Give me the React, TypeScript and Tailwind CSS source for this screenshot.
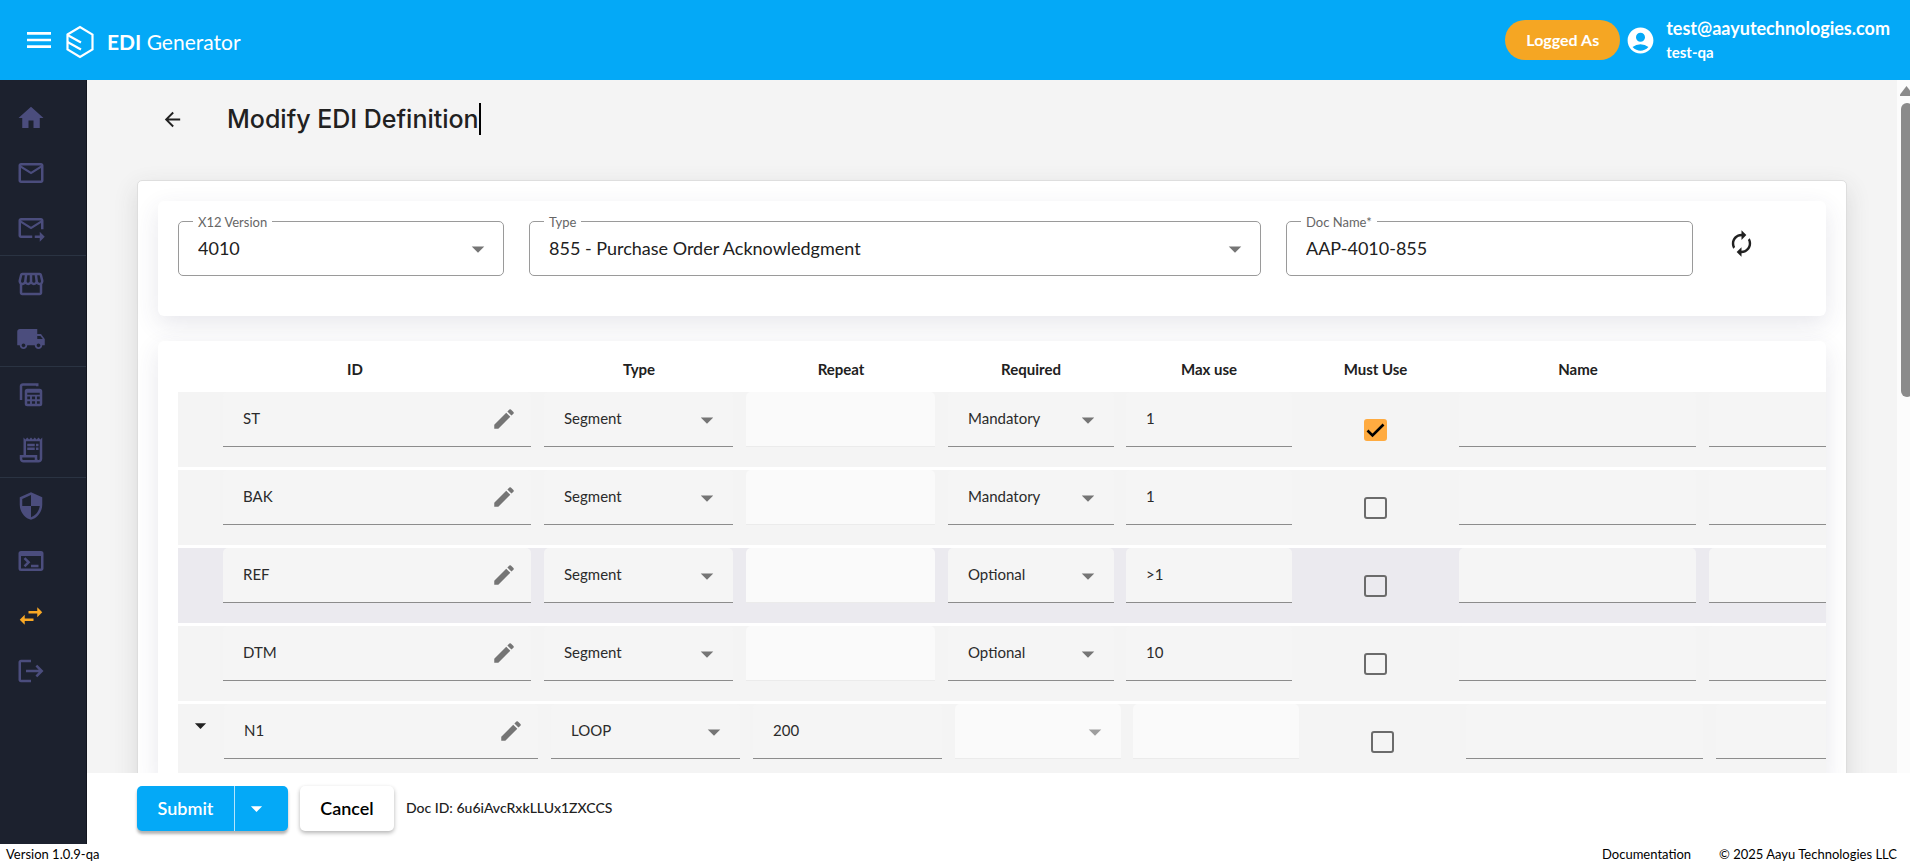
import type { ReactNode } from "react";
import type { IconType } from "react-icons";
import {
    MdAccountCircle,
    MdArrowBack,
    MdArrowDropDown,
    MdAutorenew,
    MdEdit,
    MdHome,
    MdLocalShipping,
    MdLogout,
    MdMailOutline,
    MdMenu,
    MdOutlineForwardToInbox,
    MdOutlineReceiptLong,
    MdOutlineStorefront,
    MdOutlineTerminal,
    MdSecurity,
    MdSwapHoriz,
} from "react-icons/md";

interface Segment {
    id: string;
    type: string;
    repeat?: string;
    required?: string;
    maxUse?: string;
    mustUse?: boolean;
    active?: boolean;
}

const SEGMENTS: Segment[] = [
    { id: "ST", type: "Segment", required: "Mandatory", maxUse: "1", mustUse: true },
    { id: "BAK", type: "Segment", required: "Mandatory", maxUse: "1" },
    { id: "REF", type: "Segment", required: "Optional", maxUse: ">1", active: true },
    { id: "DTM", type: "Segment", required: "Optional", maxUse: "10" },
    { id: "N1", type: "LOOP", repeat: "200" },
];

function TablesIcon({ size = 30 }: { size?: number }) {
    return (
        <svg width={size} height={size} viewBox="0 0 24 24" fill="none" stroke="currentColor" strokeWidth="2">
            <path d="M4 16V5a1.500 1.500 0 0 1 1.500-1.500H17V5" />
            <rect x="8" y="8" width="12" height="12" rx="1" />
            <path d="M8 9.500h12M8 12.500h12M8 16.200h12M12 12v8M16 12v8" strokeWidth="1.500" />
        </svg>
    );
}

const NAV_GROUPS: { label: string; icon: IconType | typeof TablesIcon; active?: boolean }[][] = [
    [
        { label: "Home", icon: MdHome },
        { label: "Inbox", icon: MdMailOutline },
        { label: "Outbox", icon: MdOutlineForwardToInbox },
    ],
    [
        { label: "Store", icon: MdOutlineStorefront },
        { label: "Shipping", icon: MdLocalShipping },
    ],
    [
        { label: "Tables", icon: TablesIcon },
        { label: "Receipts", icon: MdOutlineReceiptLong },
    ],
    [
        { label: "Security", icon: MdSecurity },
        { label: "Terminal", icon: MdOutlineTerminal },
        { label: "EDI definitions", icon: MdSwapHoriz, active: true },
        { label: "Log out", icon: MdLogout },
    ],
];

function Header() {
    return (
        <header className="flex h-20 shrink-0 items-center bg-[#04a9f7] pl-[23px] pr-[20px] text-white">
            <button type="button" aria-label="Menu">
                <MdMenu size={32} />
            </button>
            <a href="#" className="ml-[10px] flex items-center pt-1">
                <svg width="30" height="36" viewBox="0 0 30 36" fill="none" stroke="currentColor" strokeWidth="2.2">
                    <path d="M2.500 10.500 15 3l12.500 7.500v15L15 33 2.500 25.500z" />
                    <path d="M2.500 11 16 18.500M2.500 18 16 25.500" />
                </svg>
                <span className="ml-3 font-['Lato'] text-[21px] leading-8">
                    <b>EDI</b> Generator
                </span>
            </a>
            <div className="ml-auto flex items-center">
                <button type="button" className="h-10 rounded-full bg-[#f5a623] px-[21px] text-[16px] font-bold">
                    Logged As
                </button>
                <MdAccountCircle size={31} className="ml-[5px]" />
                <div className="ml-[10px] font-bold">
                    <div className="text-[18px] leading-6">test@aayutechnologies.com</div>
                    <div className="text-[15px] leading-6">test-qa</div>
                </div>
            </div>
        </header>
    );
}

function Sidebar() {
    return (
        <nav className="w-[87px] shrink-0 border-r border-[#12151f] bg-[#1c212e] pt-[10px]">
            {NAV_GROUPS.map((group, i) => (
                <ul key={i} className="border-b border-[#2a3342] last:border-b-0">
                    {group.map(({ label, icon: Icon, active }) => (
                        <li key={label}>
                            <a
                                href="#"
                                aria-label={label}
                                className={`flex h-[55px] items-center pl-4 ${active ? "text-[#f9a825]" : "text-[#4b4d7d]"}`}
                            >
                                <Icon size={30} />
                            </a>
                        </li>
                    ))}
                </ul>
            ))}
        </nav>
    );
}

function OutlinedField({ id, label, arrow, children }: { id: string; label: string; arrow?: boolean; children: ReactNode }) {
    return (
        <div className="relative h-[55px] rounded-[5px] border border-[#9a9a9a]">
            <label htmlFor={id} className="absolute -top-[10px] left-[14px] bg-white px-[5px] text-[13px] leading-5 text-[#666]">
                {label}
            </label>
            {children}
            {arrow && <MdArrowDropDown size={30} className="pointer-events-none absolute right-[10px] top-3 text-[#757575]" />}
        </div>
    );
}

const outlinedControl = "block h-[52px] w-full appearance-none bg-transparent px-[19px] text-[18px] text-[#212121] outline-none";

function DocumentForm() {
    return (
        <section className="grid h-[115px] grid-cols-[326fr_732fr_407fr_108fr] items-start gap-x-[25px] rounded-md bg-white pl-5 pt-5 shadow-[0_8px_24px_rgba(60,60,100,0.12)]">
            <OutlinedField id="version" label="X12 Version" arrow>
                <select id="version" className={outlinedControl}>
                    <option>4010</option>
                </select>
            </OutlinedField>
            <OutlinedField id="type" label="Type" arrow>
                <select id="type" className={outlinedControl}>
                    <option>855 - Purchase Order Acknowledgment</option>
                </select>
            </OutlinedField>
            <OutlinedField id="doc-name" label="Doc Name*">
                <input id="doc-name" defaultValue="AAP-4010-855" className={outlinedControl} />
            </OutlinedField>
            <button type="button" aria-label="Refresh" className="mt-2 w-fit pl-[9px] text-[#212121]">
                <MdAutorenew size={29} />
            </button>
        </section>
    );
}

function FilledField({ disabled, children }: { disabled?: boolean; children?: ReactNode }) {
    return (
        <div
            className={`relative h-[55px] rounded-t-[5px] border-b bg-clip-padding ${
                disabled ? "border-[#ebebeb] bg-[#fafafa]" : "border-[#8c8c8c] bg-[#f5f5f5]"
            }`}
        >
            {children}
        </div>
    );
}

const filledControl = "block h-[52px] w-full appearance-none bg-transparent px-5 text-[15px] text-[#2b2b2b] outline-none";

function SelectField({ label, value }: { label: string; value?: string }) {
    return (
        <FilledField disabled={!value}>
            <select aria-label={label} disabled={!value} className={filledControl}>
                <option>{value}</option>
            </select>
            <MdArrowDropDown
                size={30}
                className={`pointer-events-none absolute right-[11px] top-[13px] ${value ? "text-[#757575]" : "text-[#9e9e9e]"}`}
            />
        </FilledField>
    );
}

function TextField({ label, value, disabled }: { label: string; value?: string; disabled?: boolean }) {
    return (
        <FilledField disabled={disabled}>
            <input aria-label={label} defaultValue={value} disabled={disabled} className={filledControl} />
        </FilledField>
    );
}

function SegmentRow({ segment }: { segment: Segment }) {
    const isLoop = segment.type === "LOOP";
    // Loop rows are indented one step
    const cell = isLoop ? "pl-[7px] pr-[6px]" : "pr-[13px]";
    const narrowCell = isLoop ? "pl-[7px] pr-[5px]" : "pr-3";

    return (
        <tr
            className={`h-[78px] align-top [&>td]:border-b-[3px] [&>td]:border-white ${
                segment.active ? "bg-[#ebeaef]" : "bg-[#f4f4f4]"
            }`}
        >
            <td>
                {isLoop && (
                    <button type="button" aria-label="Expand" className="ml-[9px] mt-2 block text-[#212121]">
                        <MdArrowDropDown size={27} />
                    </button>
                )}
            </td>
            <td className={isLoop ? "pl-px pr-[6px]" : "pr-[13px]"}>
                <FilledField>
                    <input aria-label="ID" defaultValue={segment.id} className={filledControl} />
                    <button type="button" aria-label="Edit" className="absolute right-[14px] top-[14px] text-[#757575]">
                        <MdEdit size={26} />
                    </button>
                </FilledField>
            </td>
            <td className={cell}>
                <SelectField label="Type" value={segment.type} />
            </td>
            <td className={cell}>
                <TextField label="Repeat" value={segment.repeat} disabled={!isLoop} />
            </td>
            <td className={narrowCell}>
                <SelectField label="Required" value={segment.required} />
            </td>
            <td className={narrowCell}>
                <TextField label="Max use" value={segment.maxUse} disabled={isLoop} />
            </td>
            <td className={narrowCell}>
                <span className="relative mx-auto mt-[27px] block h-[22px] w-[23px]">
                    <input
                        type="checkbox"
                        aria-label="Must Use"
                        defaultChecked={segment.mustUse}
                        className="block h-[22px] w-[23px] appearance-none rounded-[3px] border-2 border-[#6b6b6b] checked:border-[#ffab40] checked:bg-[#ffab40]"
                    />
                    {segment.mustUse && (
                        <svg
                            width="23"
                            height="22"
                            viewBox="0 0 23 22"
                            fill="none"
                            stroke="black"
                            strokeWidth="2.600"
                            className="pointer-events-none absolute left-0 top-0"
                        >
                            <path d="m3.500 11.500 5 5L19.500 5.500" />
                        </svg>
                    )}
                </span>
            </td>
            <td className={cell}>
                <TextField label="Name" />
            </td>
            <td className={cell}>
                <TextField label="Notes" />
            </td>
        </tr>
    );
}

function SegmentTable() {
    return (
        <section className="mt-[25px] overflow-hidden rounded-md bg-white pl-5 pt-[14px] shadow-[0_8px_24px_rgba(60,60,100,0.12)]">
            <table className="w-[1781px] table-fixed border-separate border-spacing-0">
                <colgroup>
                    <col className="w-[45px]" />
                    <col className="w-[321px]" />
                    <col className="w-[202px]" />
                    <col className="w-[202px]" />
                    <col className="w-[178px]" />
                    <col className="w-[178px]" />
                    <col className="w-[155px]" />
                    <col className="w-[250px]" />
                    <col className="w-[250px]" />
                </colgroup>
                <thead>
                    <tr className="h-[37px] text-[15px] text-[#212121] [&>th]:pb-2 [&>th]:pr-3">
                        <th colSpan={2}>ID</th>
                        <th>Type</th>
                        <th>Repeat</th>
                        <th>Required</th>
                        <th>Max use</th>
                        <th>Must Use</th>
                        <th>Name</th>
                        <th />
                    </tr>
                </thead>
                <tbody>
                    {SEGMENTS.map(segment => (
                        <SegmentRow key={segment.id} segment={segment} />
                    ))}
                </tbody>
            </table>
        </section>
    );
}

function ActionBar() {
    return (
        <div className="flex h-[71px] shrink-0 items-center bg-white pl-[50px]">
            <div className="flex h-[45px] rounded-[5px] bg-[#04a9f7] text-white shadow-[0_3px_3px_rgba(0,0,0,0.3)]">
                <button type="button" className="w-[98px] border-r border-white/70 text-[18px] font-semibold">
                    Submit
                </button>
                <button type="button" aria-label="More submit options" className="flex w-[53px] items-center pl-2">
                    <MdArrowDropDown size={27} />
                </button>
            </div>
            <button
                type="button"
                className="ml-3 h-[45px] w-[94px] rounded-[5px] bg-white text-[18px] font-semibold text-black shadow-[0_2px_4px_rgba(0,0,0,0.3)]"
            >
                Cancel
            </button>
            <span className="ml-3 pb-[3px] text-[14px] font-medium text-[#212121]">Doc ID: 6u6iAvcRxkLLUx1ZXCCS</span>
        </div>
    );
}

export default function App() {
    return (
        <div className="flex h-screen flex-col overflow-hidden bg-white font-['Lato','Open_Sans',sans-serif]">
            <Header />
            <div className="flex min-h-0 flex-1">
                <Sidebar />
                <div className="flex min-w-0 flex-1 flex-col">
                    <div className="flex min-h-0 flex-1">
                        <main className="min-w-0 flex-1 overflow-hidden bg-[#f4f4f4] pl-[50px] pr-[50px]">
                            <div className="flex h-[100px] items-start pl-6 pt-[23px]">
                                <button type="button" aria-label="Back" className="mt-[5px] text-[#212121]">
                                    <MdArrowBack size={23} />
                                </button>
                                <h1 className="ml-[43px] flex items-center font-['Inter'] text-[25px] font-medium leading-8 text-[#212121]">
                                    Modify EDI Definition
                                    <span className="h-8 w-[2px] bg-black" />
                                </h1>
                            </div>
                            <div className="rounded-[5px] border border-[#dedede] bg-white p-5 shadow-[0_8px_24px_rgba(60,60,60,0.14)]">
                                <DocumentForm />
                                <SegmentTable />
                            </div>
                        </main>
                        <div className="flex w-[13px] shrink-0 flex-col overflow-hidden bg-[#fcfcfc] pl-[3px]" aria-hidden="true">
                            <svg width="12" height="10" viewBox="0 0 12 10" className="mt-[6px] shrink-0" fill="#8b8b8b">
                                <path d="M6.500 0 12 7v3H0V8.500z" />
                            </svg>
                            <div className="ml-px mt-[7px] h-[294px] w-3 shrink-0 rounded-full bg-[#8b8b8b]" />
                        </div>
                    </div>
                    <ActionBar />
                </div>
            </div>
            <footer className="flex h-[18px] shrink-0 items-center pl-[6px] pr-[13px] pt-[2px] text-[13px] leading-4 text-black">
                <span>Version 1.0.9-qa</span>
                <a href="#" className="ml-auto">
                    Documentation
                </a>
                <span className="ml-7">© 2025 Aayu Technologies LLC</span>
            </footer>
        </div>
    );
}
